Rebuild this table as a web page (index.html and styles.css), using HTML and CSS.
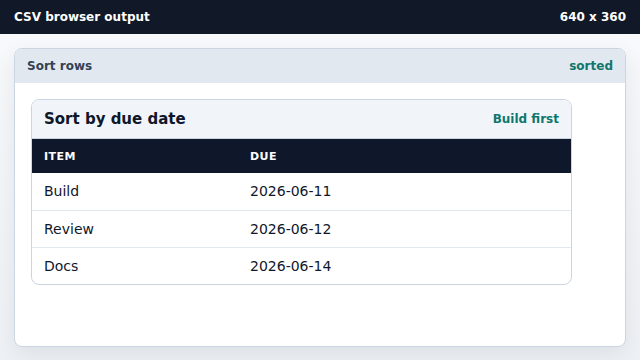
FILE: index.html
```
<!DOCTYPE html>
<html lang="en">
<head>
<meta charset="utf-8">
<title>CSV browser output</title>
<link rel="stylesheet" href="styles.css">
</head>
<body>
<header class="topbar">
  <span class="topbar-title">CSV browser output</span>
  <span class="topbar-size">640 x 360</span>
</header>
<main class="stage">
  <section class="panel">
    <div class="panel-head">
      <span class="panel-title">Sort rows</span>
      <span class="panel-status">sorted</span>
    </div>
    <div class="panel-body">
      <div class="table-card">
        <div class="table-head">
          <h2 class="table-title">Sort by due date</h2>
          <span class="table-note">Build first</span>
        </div>
        <table class="data">
          <thead>
            <tr><th class="col-item">Item</th><th>Due</th></tr>
          </thead>
          <tbody>
            <tr><td>Build</td><td>2026-06-11</td></tr>
            <tr><td>Review</td><td>2026-06-12</td></tr>
            <tr><td>Docs</td><td>2026-06-14</td></tr>
          </tbody>
        </table>
      </div>
    </div>
  </section>
</main>
</body>
</html>
```
FILE: styles.css
```
* { box-sizing: border-box; }
html, body { margin: 0; padding: 0; }
body {
  width: 640px;
  height: 360px;
  overflow: hidden;
  font-family: "DejaVu Sans", Verdana, sans-serif;
  background: linear-gradient(180deg, #f8fafc 0%, #eef1f5 100%);
  color: #0f172a;
  display: flex;
  flex-direction: column;
}
.topbar {
  height: 34px;
  flex: none;
  background: #111827;
  color: #ffffff;
  display: flex;
  align-items: center;
  justify-content: space-between;
  padding: 0 14px;
  font-size: 12px;
  font-weight: 700;
}
.stage {
  flex: 1;
  padding: 14px 14px 13px;
  display: flex;
  flex-direction: column;
  min-height: 0;
}
.panel {
  flex: 1;
  background: #ffffff;
  border: 1px solid #cbd5e1;
  border-radius: 8px;
  box-shadow: 0 8px 24px rgba(15, 23, 42, 0.08);
  overflow: hidden;
  display: flex;
  flex-direction: column;
}
.panel-head {
  height: 34px;
  flex: none;
  background: #e2e8f0;
  display: flex;
  align-items: center;
  justify-content: space-between;
  padding: 0 12px;
  font-size: 12px;
  font-weight: 700;
}
.panel-title { color: #334155; }
.panel-status { color: #0f766e; }
.panel-body {
  padding: 16px;
}
.table-card {
  width: 541px;
  border: 1px solid #cbd5e1;
  border-radius: 8px;
  overflow: hidden;
  background: #ffffff;
}
.table-head {
  height: 39px;
  background: #f1f5f9;
  border-bottom: 1px solid #cbd5e1;
  display: flex;
  align-items: center;
  justify-content: space-between;
  padding: 0 12px;
}
.table-title {
  margin: 0;
  font-size: 15px;
  font-weight: 700;
  color: #0f172a;
}
.table-note {
  font-size: 12px;
  font-weight: 700;
  color: #0f766e;
}
.data {
  width: 100%;
  border-collapse: collapse;
  table-layout: fixed;
}
.data th {
  background: #0f172a;
  color: #ffffff;
  text-align: left;
  font-size: 11px;
  letter-spacing: 0.04em;
  font-weight: 700;
  text-transform: uppercase;
  height: 34px;
  padding: 0 12px;
}
.data th.col-item { width: 206px; }
.data td {
  font-size: 14px;
  color: #0f172a;
  height: 37px;
  padding: 0 12px;
  border-top: 1px solid #e2e8f0;
}
.data tbody tr:first-child td { border-top: none; }
```
